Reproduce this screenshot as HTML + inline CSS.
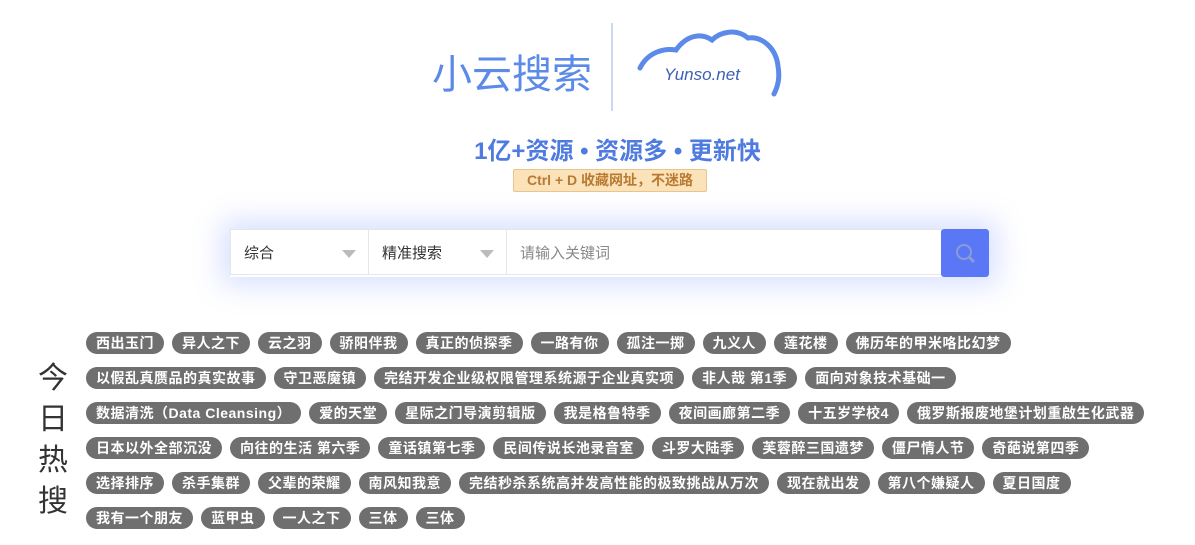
<!DOCTYPE html>
<html><head><meta charset="utf-8"><style>
body{margin:0;width:1195px;height:545px;background:#fff;font-family:"Liberation Sans","Noto Sans CJK SC",sans-serif;position:relative;overflow:hidden}
.logo{position:absolute;left:432px;top:47px;font-size:40px;color:#5b8ae8;line-height:56px}
.vl{position:absolute;left:611px;top:23px;width:2px;height:88px;background:#c9d8f5}
.slogan{position:absolute;left:20px;width:1195px;top:131px;text-align:center;font-size:24px;font-weight:bold;color:#4f7be0;letter-spacing:0px}
.ctrl{position:absolute;left:513px;top:169px;width:192px;height:21px;background:#fbe2b8;border:1px solid #e8c48e;border-radius:2px;color:#b87a32;font-size:14px;font-weight:bold;text-align:center;line-height:21px}
.box{position:absolute;left:230px;top:229px;width:759px;height:48px;box-shadow:0 0 28px 8px rgba(110,140,255,.28);background:#fff}
.sel{position:absolute;top:0;height:46px;border:1px solid #e6e6e6;font-size:15px;color:#333;line-height:48px;padding-left:13px;box-sizing:border-box}
.tri{position:absolute;right:12px;top:20px;width:0;height:0;border-left:7px solid transparent;border-right:7px solid transparent;border-top:8px solid #bbb}
.btn{position:absolute;left:711px;top:0;width:48px;height:48px;background:#5a78f5;border-radius:3px}
.side{position:absolute;left:38px;top:358px;font-size:30px;line-height:41px;color:#333;width:34px}
.tags{position:absolute;left:86px;top:332px;width:1100px}
.row{display:flex;height:35px}
.t{display:inline-block;height:22px;line-height:22px;background:#6f6f6f;color:#fff;font-weight:bold;font-size:14px;letter-spacing:0.5px;padding:0 10px;border-radius:11px;margin-right:8px;white-space:nowrap}
</style></head><body>
<div class="logo">小云搜索</div>
<div class="vl"></div>
<svg style="position:absolute;left:636px;top:22px" width="150" height="80" viewBox="0 0 150 80">
<path d="M4 46 C12 30 28 26 40 28 C50 14 64 10 76 18 C84 10 100 6 112 16 C126 14 140 26 142 44 C144 56 142 64 138 72" fill="none" stroke="#5b8ae8" stroke-width="5" stroke-linecap="round"/>
<text x="28" y="58" font-family="Liberation Sans,sans-serif" font-style="italic" font-size="17" fill="#3d5fb8">Yunso.net</text>
</svg>
<div class="slogan">1亿+资源 • 资源多 • 更新快</div>
<div class="ctrl">Ctrl + D 收藏网址，不迷路</div>
<div class="box">
<div class="sel" style="left:0;width:139px">综合<div class="tri"></div></div>
<div class="sel" style="left:138px;width:139px">精准搜索<div class="tri"></div></div>
<div class="sel" style="left:276px;width:436px;color:#888">请输入关键词</div>
<div class="btn"><svg width="48" height="48"><circle cx="23" cy="23" r="7" fill="none" stroke="#8a9bd6" stroke-width="2"/><line x1="28" y1="28" x2="33" y2="33" stroke="#8a9bd6" stroke-width="3"/></svg></div>
</div>
<div class="side">今<br>日<br>热<br>搜</div>
<div class="tags">
<div class="row"><span class="t">西出玉门</span><span class="t">异人之下</span><span class="t">云之羽</span><span class="t">骄阳伴我</span><span class="t">真正的侦探季</span><span class="t">一路有你</span><span class="t">孤注一掷</span><span class="t">九义人</span><span class="t">莲花楼</span><span class="t">佛历年的甲米咯比幻梦</span></div>
<div class="row"><span class="t">以假乱真赝品的真实故事</span><span class="t">守卫恶魔镇</span><span class="t">完结开发企业级权限管理系统源于企业真实项</span><span class="t">非人哉 第1季</span><span class="t">面向对象技术基础一</span></div>
<div class="row"><span class="t">数据清洗（Data Cleansing）</span><span class="t">爱的天堂</span><span class="t">星际之门导演剪辑版</span><span class="t">我是格鲁特季</span><span class="t">夜间画廊第二季</span><span class="t">十五岁学校4</span><span class="t">俄罗斯报废地堡计划重啟生化武器</span></div>
<div class="row"><span class="t">日本以外全部沉没</span><span class="t">向往的生活 第六季</span><span class="t">童话镇第七季</span><span class="t">民间传说长池录音室</span><span class="t">斗罗大陆季</span><span class="t">芙蓉醉三国遗梦</span><span class="t">僵尸情人节</span><span class="t">奇葩说第四季</span></div>
<div class="row"><span class="t">选择排序</span><span class="t">杀手集群</span><span class="t">父辈的荣耀</span><span class="t">南风知我意</span><span class="t">完结秒杀系统高并发高性能的极致挑战从万次</span><span class="t">现在就出发</span><span class="t">第八个嫌疑人</span><span class="t">夏日国度</span></div>
<div class="row"><span class="t">我有一个朋友</span><span class="t">蓝甲虫</span><span class="t">一人之下</span><span class="t">三体</span><span class="t">三体</span></div>
</div>
</body></html>
